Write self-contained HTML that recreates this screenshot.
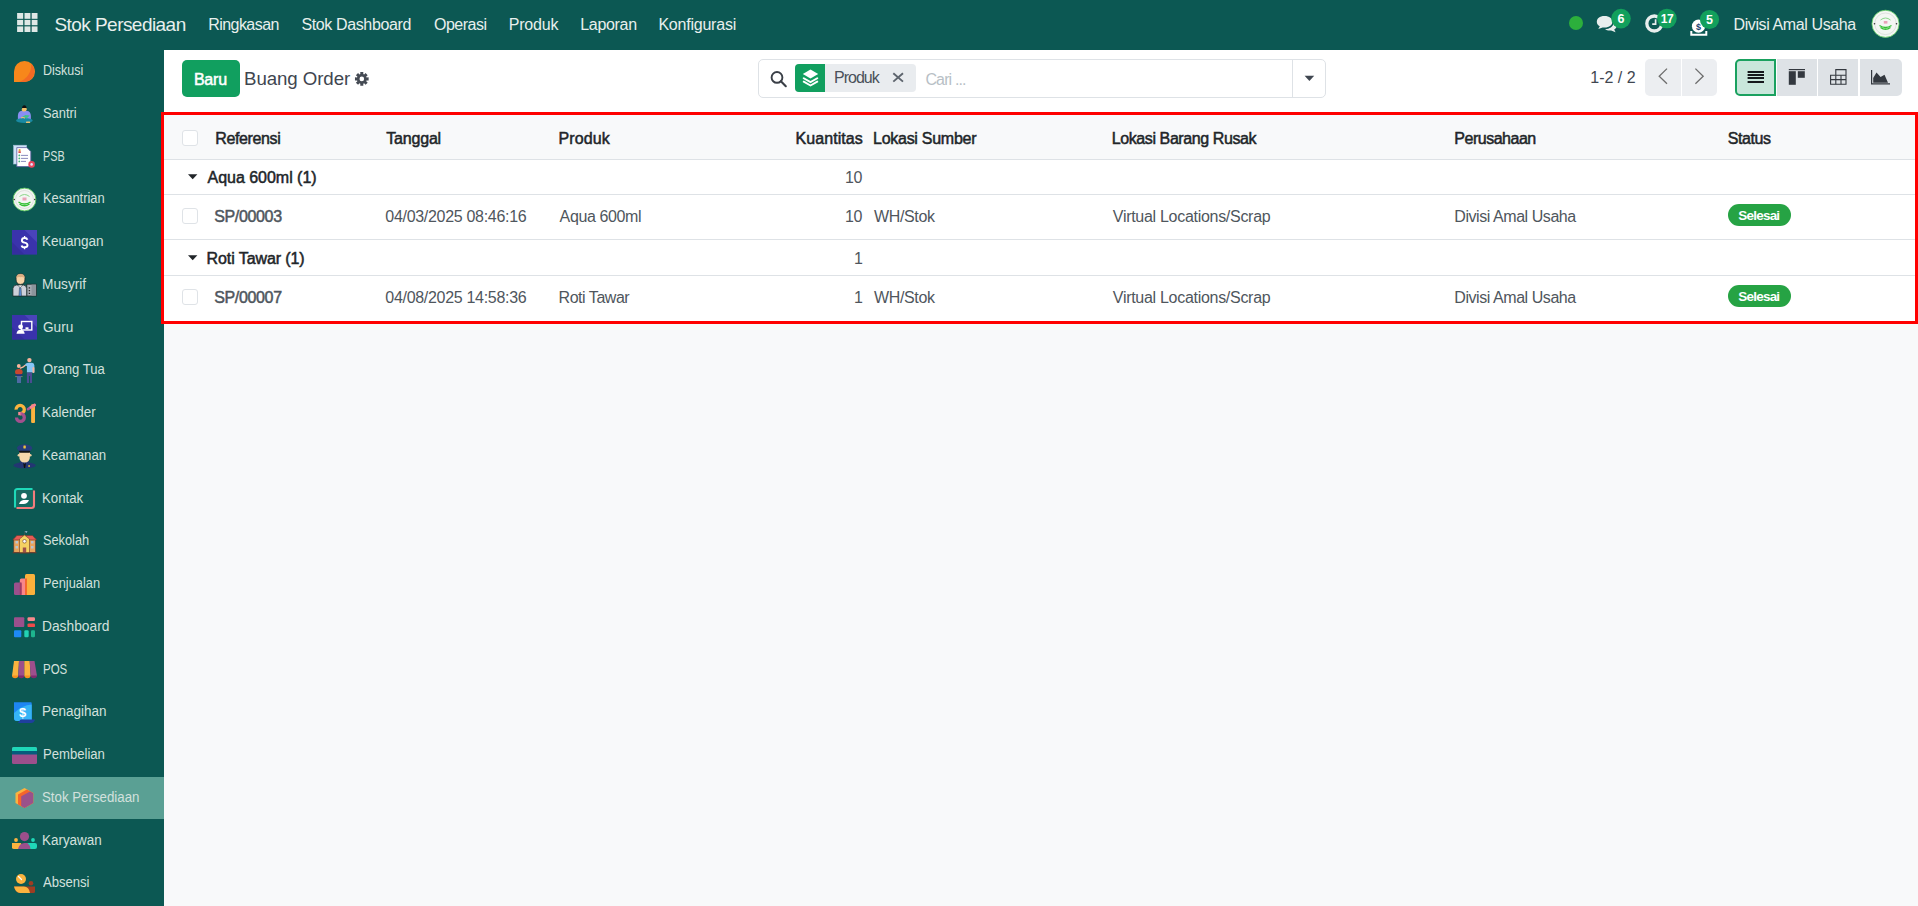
<!DOCTYPE html>
<html><head><meta charset="utf-8"><title>Buang Order</title>
<style>
html,body{margin:0;padding:0;}
body{width:1918px;height:906px;position:relative;overflow:hidden;background:#f8f9fa;font-family:"Liberation Sans",sans-serif;}
.t{position:absolute;white-space:nowrap;}
.a{position:absolute;}
.nav{left:0;top:0;width:1918px;height:50px;background:#0c5853;}
.side{left:0;top:50px;width:164px;height:856px;background:#0c5853;}
.active{left:0;top:777px;width:164px;height:42px;background:#5aa094;}
.cp{left:164px;top:50px;width:1754px;height:62px;background:#ffffff;}
.tbl{left:164px;top:115px;width:1751px;height:206px;background:#ffffff;}
.thead{left:164px;top:115px;width:1751px;height:44px;background:#f8f9fa;}
.hl{position:absolute;left:164px;width:1751px;height:1px;background:#dee2e6;}
.red{left:161px;top:112px;width:1751px;height:206px;border:3px solid #ff0000;}
.cb{position:absolute;width:14px;height:14px;border:1px solid #dfe3e7;border-radius:3px;background:#fff;}
.btn{left:182px;top:60px;width:58px;height:37px;background:#119f5f;border-radius:5px;}
.search{left:758px;top:59px;width:566px;height:37px;border:1px solid #dee2e6;border-radius:5px;background:#fff;}
.facet{left:795px;top:64px;width:121px;height:28px;background:#e9ecef;border-radius:4px;overflow:hidden;}
.facet .ic{position:absolute;left:0;top:0;width:30px;height:28px;background:#119f5f;}
.sdiv{left:1292px;top:60px;width:1px;height:37px;background:#dee2e6;}
.pager{left:1645px;top:59px;width:72px;height:37px;background:#eceef1;border-radius:5px;}
.pdiv{left:1681px;top:59px;width:1px;height:37px;background:#ffffff;}
.vb{position:absolute;top:59px;height:37px;background:#dee2e6;}
.badge{position:absolute;width:63px;height:22px;border-radius:11px;background:#26a344;}
.nb{position:absolute;width:20px;height:20px;border-radius:10px;background:#12a05c;color:#fff;font-size:12px;line-height:20px;text-align:center;}

</style></head>
<body>
<div class="a nav"></div>
<div class="a side"></div>
<div class="a active"></div>
<div class="a cp"></div>
<div class="a tbl"></div>
<div class="a thead"></div>
<div class="hl" style="top:159px"></div>
<div class="hl" style="top:194px"></div>
<div class="hl" style="top:239px"></div>
<div class="hl" style="top:275px"></div>
<div class="a red"></div>
<div class="cb" style="left:182px;top:130px"></div>
<div class="cb" style="left:182px;top:208px"></div>
<div class="cb" style="left:182px;top:289px"></div>
<div class="badge" style="left:1728px;top:204px"></div>
<div class="badge" style="left:1728px;top:285px"></div>
<div class="a btn"></div>
<div class="a search"></div>
<div class="a facet"><div class="ic"></div></div>
<div class="a sdiv"></div>
<div class="a pager"></div>
<div class="a pdiv"></div>
<div class="vb" style="left:1735px;width:41px;background:#c9e6db;border:2px solid #1aa15f;box-sizing:border-box;border-radius:5px 0 0 5px"></div>
<div class="vb" style="left:1777px;width:40px"></div>
<div class="vb" style="left:1818px;width:40px"></div>
<div class="vb" style="left:1860px;width:42px;border-radius:0 5px 5px 0"></div>

<svg class="a" style="left:0;top:0" width="164" height="906" viewBox="0 0 164 906">
<!-- Diskusi -->
<path d="M14,82 L14,71.5 A10.5,10.5 0 1 1 24.5,82 Z" fill="#f7871b"/>
<path d="M31.1,63.8 A10.5,10.5 0 0 1 24.5,82 L19,82 A17.4,17.4 0 0 0 31.1,63.8 Z" fill="#f26a24"/>
<!-- Santri -->
<path d="M17.9,119 Q17.4,112.6 20,111.3 Q24.3,109.6 28.6,111.3 Q31.3,112.6 30.9,119 Z" fill="#8a8ef2"/>
<ellipse cx="24.4" cy="120.6" rx="8.3" ry="2.5" fill="#1989a3"/>
<path d="M21.6,109.2 Q21.6,111.6 24.2,111.6 Q26.6,111.6 26.6,109.2 Z" fill="#f4c06a"/>
<path d="M22,108.8 Q22,105.2 24.3,105.2 Q26.6,105.2 26.6,108.8 Z" fill="#111"/>
<rect x="22.1" y="108" width="4.5" height="2" fill="#f4c06a"/>
<path d="M22.2,116.8 L25.5,115 L29.8,115.4 L26.6,118.6 Z" fill="#3fc08b"/>
<path d="M21,117.8 Q23,117 25,118.2" stroke="#f4c06a" stroke-width="1" fill="none"/>
<rect x="26" y="121.4" width="4.2" height="1.6" rx="0.6" fill="#e8c070"/>
<!-- PSB -->
<rect x="13.6" y="145.2" width="13" height="18.8" fill="#cfe3f6" stroke="#9fbcd8" stroke-width="0.6"/>
<path d="M16.8,147.6 L26.8,147.6 L30.8,151.6 L30.8,166.6 L16.8,166.6 Z" fill="#fff" stroke="#5a5aa0" stroke-width="0.8"/>
<circle cx="19.6" cy="150.2" r="1.1" fill="#e8a03a"/><rect x="18.4" y="151.3" width="2.4" height="1.6" fill="#d23d3d"/>
<circle cx="19.3" cy="155.4" r="0.9" fill="#45b57a"/><circle cx="19.3" cy="158.4" r="0.9" fill="#45b57a"/><circle cx="19.3" cy="161.4" r="0.9" fill="#45b57a"/>
<path d="M21,155.4 H28 M21,158.4 H28 M21,161.4 H26" stroke="#5a5aa0" stroke-width="0.7"/>
<circle cx="31.6" cy="164.4" r="3.3" fill="#e8475e"/><circle cx="31.6" cy="164.4" r="1.3" fill="#dfe6ff"/>
<!-- Kesantrian -->
<circle cx="24.5" cy="199.5" r="11.4" fill="#f3f5f2" stroke="#59c45a" stroke-width="0.9"/>
<circle cx="24.5" cy="199.5" r="9" fill="none" stroke="#c9cfc9" stroke-width="0.5"/>
<path d="M19.5,196.5 Q24.5,192.5 29.5,196.5" stroke="#7fd27f" stroke-width="0.9" fill="none"/>
<rect x="22.5" y="197.5" width="4" height="3" fill="#e9a3b8"/>
<path d="M18.5,202 Q24.5,206 30.5,202 M19.5,204 Q24.5,207.5 29.5,204" stroke="#33c033" stroke-width="1.3" fill="none"/>
<circle cx="14.2" cy="199.5" r="0.8" fill="#333"/><circle cx="34.8" cy="199.5" r="0.8" fill="#333"/>
<!-- Keuangan -->
<rect x="12" y="230" width="25" height="24.6" fill="#3a33ac"/>
<path d="M12,254.6 L12,242 L24.5,254.6 Z" fill="#2e2a8f" opacity="0.5"/><path d="M24.5,230 L37,230 L37,242.5 Z" fill="#5a56c8" opacity="0.5"/>
<path d="M24.6,236 V238.5 M24.6,247 V249.2" stroke="#fff" stroke-width="1.3"/><path d="M27.4,239.7 Q26.9,238 24.6,238 Q21.9,238 21.9,240.4 Q21.9,242.2 24.6,242.6 Q27.5,243.1 27.5,245.2 Q27.5,247.3 24.6,247.3 Q22.1,247.3 21.6,245.4" fill="none" stroke="#fff" stroke-width="1.9"/>
<!-- Musyrif -->
<rect x="26.8" y="284.2" width="9.5" height="11.8" fill="#a7adb5" stroke="#1c2a2a" stroke-width="0.8"/>
<rect x="31.5" y="284.6" width="4.4" height="11" fill="#8d949c"/>
<path d="M28.7,287.9 h1.4 M28.7,290.6 h1.4 M28.7,293.3 h1.4" stroke="#2a2a2a" stroke-width="1.3"/>
<path d="M12.9,296.1 L12.9,288.6 Q13.1,285.3 16.3,285 L23.5,285 Q26.6,285.3 26.7,288.6 L26.7,296.1 Z" fill="#cdd0da" stroke="#1c2a2a" stroke-width="0.8"/>
<path d="M17.6,285.1 L20.2,287.6 L22.8,285.1 Z" fill="#f4f4f4" stroke="#1c2a2a" stroke-width="0.5"/>
<path d="M19.5,287.8 L21,287.8 L21.6,296 L18.9,296 Z" fill="#5a8ed6" stroke="#1c2a2a" stroke-width="0.4"/>
<path d="M16,279 Q16,273.8 20.5,273.8 Q25,273.8 25,279 Q25,284.4 20.5,284.4 Q16,284.4 16,279 Z" fill="#f6d3a6" stroke="#1c2a2a" stroke-width="0.8"/>
<path d="M16.2,278.2 Q16.4,274 20.5,274 Q24.6,274 24.8,278.2 Q22.5,276.6 20.5,277.2 Q18.2,276.6 16.2,278.2 Z" fill="#dcae82"/>
<!-- Guru -->
<rect x="12" y="315" width="25" height="24.6" fill="#3a33ac"/>
<path d="M12,339.6 L12,327 L24.5,339.6 Z" fill="#2e2a8f" opacity="0.5"/><path d="M24.5,315 L37,315 L37,327.5 Z" fill="#5a56c8" opacity="0.5"/>
<rect x="21.5" y="321.5" width="10.3" height="8.5" fill="none" stroke="#fff" stroke-width="1.4"/>
<circle cx="20.6" cy="326.8" r="2.4" fill="#fff"/>
<path d="M16.5,333.8 Q17,329.8 20.6,329.8 Q24.2,329.8 24.7,333.8 Z" fill="#fff"/>
<rect x="25.5" y="327.3" width="3" height="2" fill="#fff"/>
<!-- Orang Tua -->
<circle cx="29.4" cy="360.1" r="2.2" fill="#f9b59c"/>
<path d="M24.5,365.5 Q25.5,363 28,362.8 L32,362.8 Q34.3,363 34.4,365.5 L34.4,372.4 L32.1,372.4 L32.1,372.4 L26.9,372.4 L26.9,366 Z" fill="#84c6f6"/>
<rect x="32.5" y="367" width="1.9" height="6" rx="0.9" fill="#f9b59c"/>
<path d="M26.9,372.4 H32 V383 H30 V376 H29 V383 H26.9 Z" fill="#4b4c92"/>
<path d="M20.5,368 Q23,367.5 25,365.5" stroke="#f9b59c" stroke-width="1.4" stroke-linecap="round" fill="none"/>
<circle cx="18.8" cy="366" r="1.9" fill="#f9b59c"/>
<path d="M15,372 Q15,369 18.8,369 Q22.7,369 22.7,372 Q22.7,375 18.8,375 Q15,375 15,372 Z" fill="#c6472e"/>
<path d="M15.6,374.2 H22.2 V376 H15.6 Z" fill="#22357a"/>
<path d="M15.2,376.6 H22.6" stroke="#e8b07a" stroke-width="0.5"/>
<path d="M17,376 H21 V383 H17 Z" fill="#4e6aa3"/>
<!-- Kalender -->
<path d="M16.1,409.6 A4.1,4.1 0 1 1 20.2,413.6" fill="none" stroke="#fbb33f" stroke-width="3.3"/>
<path d="M18.2,413.6 L21,413.6" stroke="#f58a93" stroke-width="3.3"/>
<path d="M20.4,413.6 A3.9,3.9 0 1 1 16.5,417.5" fill="none" stroke="#a2508e" stroke-width="3.3"/>
<path d="M20.3,411.95 L21.3,411.95 L21.3,415.25 L20.3,415.25 Z" fill="#d9708f"/>
<rect x="31.1" y="404.2" width="3.9" height="18.8" rx="1" fill="#fbb33f"/>
<path d="M28,409.2 L34.6,405" stroke="#b0559a" stroke-width="2.6" stroke-linecap="round"/>
<path d="M31,407.3 L34.6,405" stroke="#f7848e" stroke-width="2.8" stroke-linecap="round"/>
<!-- Keamanan -->
<ellipse cx="24.6" cy="465.3" rx="11.2" ry="3" fill="#233672"/>
<path d="M20.5,460.5 Q24.6,462.5 28.7,460.5 L30.5,465 L18.7,465 Z" fill="#233672"/>
<circle cx="18.9" cy="455.3" r="1.3" fill="#f2cf9f"/><circle cx="30.3" cy="455.3" r="1.3" fill="#f2cf9f"/>
<path d="M19.2,451.2 L30,451.2 L30,455.5 Q30,462.6 24.6,462.6 Q19.2,462.6 19.2,455.5 Z" fill="#f6d8ab"/>
<path d="M16.8,448.3 Q17.5,444.6 24.6,444.2 Q31.7,444.6 32.4,448.3 L30.2,451.3 L19,451.3 Z" fill="#263d7c"/>
<rect x="19" y="450.8" width="11.2" height="1.9" rx="0.8" fill="#151515"/>
<rect x="23.4" y="445.6" width="2.4" height="2.8" rx="0.4" fill="#f0c33a"/>
<path d="M23.2,462.8 L24.6,464.2 L26,462.8 L25.2,468 L24,468 Z" fill="#111"/>
<rect x="28.3" y="465.2" width="1.6" height="1.6" fill="#f0c33a"/>
<!-- Kontak -->
<rect x="15" y="489" width="19" height="19" rx="2" fill="#166a61"/>
<path d="M15,507.5 L15,491.5 Q15,489 17.5,489 L32.5,489" stroke="#1fd8b8" stroke-width="2.1" fill="none"/>
<path d="M34,490.5 L34,505.5 Q34,508 31.5,508 L16.5,508" stroke="#f37c7c" stroke-width="2.1" fill="none"/>
<circle cx="24" cy="495.8" r="2.9" fill="#fff"/>
<path d="M19,504 Q20,500.5 23.5,500 L29,500 Q27.5,504 23.5,504 Z" fill="#fff"/>
<!-- Sekolah -->
<rect x="13.8" y="538.5" width="21.6" height="14" fill="#e8a45c" stroke="#6b3a2a" stroke-width="0.6"/>
<path d="M12.8,540 L16.8,535.5 L32.5,535.5 L36.6,540 Z" fill="#e65b55" stroke="#6b3a2a" stroke-width="0.6"/>
<path d="M19.5,553 L19.5,539 L24.5,535 L29.5,539 L29.5,553 Z" fill="#f5d163" stroke="#6b3a2a" stroke-width="0.6"/>
<circle cx="24.5" cy="541.3" r="1.8" fill="#fff" stroke="#6b3a2a" stroke-width="0.6"/>
<rect x="22.8" y="547.5" width="3.4" height="5" fill="#a0504a"/>
<path d="M15.5,541 h2.5 v2.5 h-2.5 Z M15.5,546 h2.5 v2.5 h-2.5 Z M31,541 h2.5 v2.5 h-2.5 Z M31,546 h2.5 v2.5 h-2.5 Z" fill="#b9c4cf"/>
<path d="M24.5,535 V531.5" stroke="#555" stroke-width="0.5"/><path d="M24.5,531.5 L27.5,531 L26.5,533 Z" fill="#9fb7d0"/>
<rect x="12.6" y="552.3" width="24" height="0.9" fill="#6b3a2a"/>
<!-- Penjualan -->
<rect x="25" y="574" width="10" height="21" rx="1.5" fill="#fbb13c"/>
<rect x="19.8" y="578.5" width="7.2" height="16.5" rx="1.5" fill="#f9868a"/>
<rect x="25" y="578.5" width="2" height="16.5" fill="#f5682e"/>
<rect x="14" y="582.5" width="7.5" height="12.5" rx="1.5" fill="#9c508c"/>
<rect x="19.8" y="582.5" width="1.8" height="12.5" fill="#a23a61"/>
<!-- Dashboard -->
<rect x="14" y="617.3" width="10.3" height="9.8" rx="1" fill="#9c508c"/>
<rect x="27.5" y="617.3" width="7.5" height="3.7" rx="1.2" fill="#f98a8c"/>
<rect x="27.5" y="623.4" width="7.5" height="3.7" rx="1.2" fill="#f04a4a"/>
<rect x="14" y="630.3" width="7.3" height="7" rx="1" fill="#1e8af5"/>
<rect x="24.3" y="630.3" width="4.4" height="7" rx="1.2" fill="#22d2b4"/>
<rect x="31" y="630.3" width="4" height="7" rx="1.2" fill="#1db58e"/>
<!-- POS -->
<path d="M14,661 L19,661 L18.2,676 L12,676 Z" fill="#fbb33f"/>
<path d="M19,661 L24.4,661 L24.4,676 L18.2,676 Z" fill="#9c4f8c"/>
<path d="M24.4,661 L29.7,661 L30.6,676 L24.4,676 Z" fill="#fbb33f"/>
<path d="M29.7,661 L34.5,661 L37,676 L30.6,676 Z" fill="#9c4f8c"/>
<path d="M12,675.5 L18.2,675.5 Q18.2,678.2 15.1,678.2 Q12,678.2 12,675.5 Z" fill="#f7901e"/>
<path d="M18.2,675.5 L24.4,675.5 Q24.4,678.2 21.3,678.2 Q18.2,678.2 18.2,675.5 Z" fill="#7d2b6e"/>
<path d="M24.4,675.5 L30.6,675.5 Q30.6,678.2 27.5,678.2 Q24.4,678.2 24.4,675.5 Z" fill="#f7901e"/>
<path d="M30.6,675.5 L37,675.5 Q37,678.2 33.8,678.2 Q30.6,678.2 30.6,675.5 Z" fill="#7d2b6e"/>
<!-- Penagihan -->
<path d="M14,702.2 L31,702.2 Q31.7,702.2 31.7,703 L31.7,721 L17,721 Q14,721 14,718 Z" fill="#1e86f2"/>
<path d="M14,713 Q22,705 31.7,704.5 L31.7,721 L17,721 Q14,721 14,718 Z" fill="#36b4f6"/>
<path d="M18,723 Q20,719.5 21,719.5 L35,719.5 Q34,723 31,723 Z" fill="#1f3f9f"/>
<text x="22.5" y="716.5" font-family="Liberation Sans" font-weight="700" font-size="13" fill="#fff" text-anchor="middle">$</text>
<!-- Pembelian -->
<rect x="12" y="747" width="25" height="17" rx="1.5" fill="#9c4f8c"/>
<path d="M12,748.5 Q12,747 13.5,747 L35.5,747 Q37,747 37,748.5 L37,751 L12,751 Z" fill="#1fd7b8"/>
<rect x="12" y="751" width="25" height="3.5" fill="#075b7c"/>
<!-- Stok -->
<path d="M24.5,788 L33.2,793 L33.2,803 L24.5,808 L15.5,803 L15.5,793 Z" fill="#fbb33f"/>
<path d="M18,794.6 L26.9,789.6 L33.2,793 L33.2,803 L24.5,808 L18,804.5 Z" fill="#f5652a"/>
<path d="M21.2,796.3 L30.1,791.4 L33.2,793.2 L33.2,803 L24.5,808 L21.2,806 Z" fill="#9a518a"/>
<!-- Karyawan -->
<circle cx="16" cy="840" r="1.9" fill="#fbb33f"/>
<circle cx="24.5" cy="836.6" r="4.6" fill="#9c4f8c"/>
<circle cx="33" cy="840" r="1.9" fill="#1fd7b8"/>
<path d="M12,843 Q12,843 14,843 L21,843 L23,849 L14,849 Q12,849 12,847.5 Z" fill="#fbb33f"/>
<path d="M18,849 Q19.5,843 24.5,843 L30,843 L31.5,849 Z" fill="#9c4f8c"/>
<path d="M27.5,843 L35,843 Q37,843 37,845 L37,847 Q37,849 35,849 L30.5,849 Q30,845 27.5,843 Z" fill="#1fd7b8"/>
<!-- Absensi -->
<circle cx="21" cy="879" r="5" fill="#fbb33f"/>
<path d="M18.5,876.5 L21.5,879.5" stroke="#fff" stroke-width="1.2" stroke-linecap="round"/>
<circle cx="31" cy="883.2" r="2.3" fill="#9e3d22"/>
<path d="M14,886.5 L28,886.5 L35,886.5 L35,891.5 Q35,893 33.5,893 L20,893 Q15.5,893 14,886.5 Z" fill="#9e3d22"/>
<path d="M14,886.5 L24,886.5 Q29,886.5 30,893 L20,893 Q15.5,893 14,886.5 Z" fill="#fbb33f"/>
</svg>

<svg class="a" style="left:0;top:0" width="1918" height="112" viewBox="0 0 1918 112">
<!-- grid -->
<g fill="#dfe8e6">
<rect x="17.1" y="13.0" width="6.1" height="5.8"/><rect x="24.5" y="13.0" width="5.9" height="5.8"/><rect x="31.7" y="13.0" width="5.8" height="5.8"/><rect x="17.1" y="19.9" width="6.1" height="5.3"/><rect x="24.5" y="19.9" width="5.9" height="5.3"/><rect x="31.7" y="19.9" width="5.8" height="5.3"/><rect x="17.1" y="26.4" width="6.1" height="5.6"/><rect x="24.5" y="26.4" width="5.9" height="5.6"/><rect x="31.7" y="26.4" width="5.8" height="5.6"/>
</g>
<!-- status dot -->
<circle cx="1576" cy="23" r="7" fill="#2caf3c"/>
<!-- chat -->
<path d="M1604.5,16 C1599.5,16 1596.8,18.7 1596.8,21.8 C1596.8,23.8 1598,25.4 1599.8,26.3 L1598.3,29 L1602.6,27.4 C1603.2,27.5 1603.9,27.6 1604.5,27.6 C1609.5,27.6 1612.4,25 1612.4,21.8 C1612.4,18.7 1609.5,16 1604.5,16 Z" fill="#e8eeed"/>
<path d="M1613.6,23.3 C1613.2,26.8 1609.6,29 1605,29.2 C1606.2,30.1 1607.8,30.6 1609.5,30.6 C1610,30.6 1610.6,30.5 1611.1,30.4 L1615.6,32.2 L1614.2,29.6 C1615.8,28.7 1616.8,27.2 1616.8,25.6 C1616.8,24.7 1616.3,23.8 1615.6,23.1 Z" fill="#e8eeed"/>
<circle cx="1621" cy="18.6" r="9.8" fill="#12a05c"/>
<text x="1621" y="23.1" font-family="Liberation Sans" font-weight="700" font-size="12.5" fill="#fff" text-anchor="middle">6</text>
<!-- clock -->
<circle cx="1654.3" cy="23.5" r="7.5" fill="none" stroke="#e8eeed" stroke-width="3.3"/>
<path d="M1655.6,19.3 L1655.6,24.2 L1652.2,24.2" fill="none" stroke="#e8eeed" stroke-width="1.7"/>
<circle cx="1666.9" cy="18.5" r="9.8" fill="#12a05c"/>
<text x="1666.9" y="22.9" font-family="Liberation Sans" font-weight="700" font-size="12" fill="#fff" text-anchor="middle" letter-spacing="-0.5">17</text>
<!-- money -->
<circle cx="1698.5" cy="26.2" r="6.6" fill="#ffffff"/>
<text x="1698.5" y="30" font-family="Liberation Sans" font-weight="700" font-size="9" fill="#1c3f6e" text-anchor="middle">$</text>
<path d="M1691.3,31 L1691.3,34.8 L1706.3,34.8 L1706.3,31" fill="none" stroke="#ffffff" stroke-width="2"/>
<circle cx="1709.5" cy="19.5" r="9.6" fill="#12a05c"/>
<text x="1709.5" y="24" font-family="Liberation Sans" font-weight="700" font-size="12.5" fill="#fff" text-anchor="middle">5</text>
<!-- avatar -->
<circle cx="1885.5" cy="23.8" r="13.6" fill="#f4f6f3" stroke="#5ccc5c" stroke-width="0.8"/>
<circle cx="1885.5" cy="23.8" r="10.8" fill="none" stroke="#cfd3cf" stroke-width="0.6"/>
<path d="M1880.5,20 Q1885.5,16 1890.5,20" stroke="#7fd27f" stroke-width="0.9" fill="none"/>
<rect x="1883.8" y="21" width="3.6" height="2.6" fill="#e9a3b8"/>
<path d="M1879.5,25.5 Q1885.5,29.5 1891.5,25.5 M1880.5,27.5 Q1885.5,31 1890.5,27.5" stroke="#33c033" stroke-width="1.3" fill="none"/>
<circle cx="1874.5" cy="23.8" r="0.8" fill="#333"/><circle cx="1896.5" cy="23.8" r="0.8" fill="#333"/>
<!-- gear -->
<path d="M366.58,77.42 L368.63,77.37 L368.63,80.43 L366.58,80.38 L366.42,80.81 L366.22,81.23 L367.71,82.65 L365.55,84.81 L364.13,83.32 L363.71,83.52 L363.28,83.68 L363.33,85.73 L360.27,85.73 L360.32,83.68 L359.89,83.52 L359.47,83.32 L358.05,84.81 L355.89,82.65 L357.38,81.23 L357.18,80.81 L357.02,80.38 L354.97,80.43 L354.97,77.37 L357.02,77.42 L357.18,76.99 L357.38,76.57 L355.89,75.15 L358.05,72.99 L359.47,74.48 L359.89,74.28 L360.32,74.12 L360.27,72.07 L363.33,72.07 L363.28,74.12 L363.71,74.28 L364.13,74.48 L365.55,72.99 L367.71,75.15 L366.22,76.57 L366.42,76.99 Z M359.50,78.90 a2.3,2.3 0 1 0 4.6,0 a2.3,2.3 0 1 0 -4.6,0 Z" fill="#454b54" fill-rule="evenodd"/>
<!-- search icon -->
<circle cx="777" cy="77.4" r="5.4" fill="none" stroke="#3a3f47" stroke-width="1.9"/>
<path d="M780.9,81.3 L785.8,86.2" stroke="#3a3f47" stroke-width="2.1" stroke-linecap="round"/>
<!-- layers icon in facet -->
<g fill="#fff">
<path d="M810.5,69.6 L818.2,74 L810.5,78.4 L802.8,74 Z"/>
<path d="M803.8,77.2 L810.5,81 L817.2,77.2 L818.2,77.8 L818.2,78.8 L810.5,83.2 L802.8,78.8 L802.8,77.8 Z"/>
<path d="M803.8,80.6 L810.5,84.4 L817.2,80.6 L818.2,81.2 L818.2,82.2 L810.5,86.4 L802.8,82.2 L802.8,81.2 Z"/>
</g>
<!-- facet x -->
<path d="M893.3,73.2 L903,81.6 M903,73.2 L893.3,81.6" stroke="#5d646d" stroke-width="1.9"/>
<!-- caret -->
<path d="M1304.6,75.8 L1314.2,75.8 L1309.4,81 Z" fill="#3f4650"/>
<!-- chevrons -->
<path d="M1667,68.6 L1659.2,76.2 L1667,83.8" fill="none" stroke="#6e6e6e" stroke-width="1.3"/>
<path d="M1695.4,68.6 L1703.2,76.2 L1695.4,83.8" fill="none" stroke="#6e6e6e" stroke-width="1.3"/>
<!-- list icon -->
<g fill="#15181c"><rect x="1747.6" y="71" width="16.4" height="2"/><rect x="1747.6" y="74" width="16.4" height="2"/><rect x="1747.6" y="77" width="16.4" height="2"/><rect x="1747.6" y="81" width="16.4" height="2"/></g>
<!-- kanban icon -->
<g fill="#33383f"><rect x="1788.8" y="69" width="16.2" height="1.2"/><rect x="1788.8" y="71.2" width="7" height="13.6"/><rect x="1797.8" y="71.2" width="7" height="6.6"/></g>
<!-- pivot icon -->
<g fill="none" stroke="#33383f" stroke-width="1.1">
<path d="M1835.8,75.2 V69.6 H1846 V84.2 H1830.6 V75.2 H1846"/>
<path d="M1830.6,79.6 H1846 M1835.8,75.2 V84.2 M1841,75.2 V84.2"/>
</g>
<!-- graph icon -->
<path d="M1871.6,70 V83.9 H1890" fill="none" stroke="#33383f" stroke-width="1.2"/>
<path d="M1873.2,82.8 L1873.2,78 L1876.5,72.5 L1880.6,77 L1884.5,74.8 L1888,82.8 Z" fill="#33383f"/>
</svg>
<svg class="a" style="left:164px;top:160px" width="40" height="120" viewBox="164 160 40 120">
<path d="M188,174.2 L197.4,174.2 L192.7,179.2 Z" fill="#212529"/>
<path d="M188,255.2 L197.4,255.2 L192.7,260.2 Z" fill="#212529"/>
</svg>

<span class="t" id="nav_title" style="left:54.40px;top:14.75px;font-size:19.00px;line-height:19.00px;letter-spacing:-0.543px;color:#e8efed;">Stok Persediaan</span>
<span class="t" id="menu0" style="left:208.20px;top:17.40px;font-size:16.00px;line-height:16.00px;letter-spacing:-0.550px;color:#e8efed;">Ringkasan</span>
<span class="t" id="menu1" style="left:301.40px;top:17.40px;font-size:16.00px;line-height:16.00px;letter-spacing:-0.369px;color:#e8efed;">Stok Dashboard</span>
<span class="t" id="menu2" style="left:434.00px;top:17.40px;font-size:16.00px;line-height:16.00px;letter-spacing:-0.500px;color:#e8efed;">Operasi</span>
<span class="t" id="menu3" style="left:508.70px;top:17.40px;font-size:16.00px;line-height:16.00px;letter-spacing:-0.200px;color:#e8efed;">Produk</span>
<span class="t" id="menu4" style="left:580.20px;top:17.40px;font-size:16.00px;line-height:16.00px;letter-spacing:-0.300px;color:#e8efed;">Laporan</span>
<span class="t" id="menu5" style="left:658.40px;top:17.40px;font-size:16.00px;line-height:16.00px;letter-spacing:-0.220px;color:#e8efed;">Konfigurasi</span>
<span class="t" id="user" style="left:1733.50px;top:17.20px;font-size:16.00px;line-height:16.00px;letter-spacing:-0.388px;color:#e8efed;">Divisi Amal Usaha</span>
<span class="t" id="side0" style="left:43.40px;top:61.73px;font-size:15.50px;line-height:15.50px;transform:scaleX(0.8065);transform-origin:0 0;color:#d3e0dd;">Diskusi</span>
<span class="t" id="side1" style="left:43.40px;top:105.47px;font-size:15.50px;line-height:15.50px;transform:scaleX(0.8302);transform-origin:0 0;color:#d3e0dd;">Santri</span>
<span class="t" id="side2" style="left:43.40px;top:148.20px;font-size:15.50px;line-height:15.50px;transform:scaleX(0.7014);transform-origin:0 0;color:#d3e0dd;">PSB</span>
<span class="t" id="side3" style="left:43.40px;top:189.94px;font-size:15.50px;line-height:15.50px;transform:scaleX(0.8330);transform-origin:0 0;color:#d3e0dd;">Kesantrian</span>
<span class="t" id="side4" style="left:42.40px;top:232.69px;font-size:15.50px;line-height:15.50px;transform:scaleX(0.8717);transform-origin:0 0;color:#d3e0dd;">Keuangan</span>
<span class="t" id="side5" style="left:42.40px;top:276.43px;font-size:15.50px;line-height:15.50px;transform:scaleX(0.8842);transform-origin:0 0;color:#d3e0dd;">Musyrif</span>
<span class="t" id="side6" style="left:43.40px;top:319.17px;font-size:15.50px;line-height:15.50px;transform:scaleX(0.8768);transform-origin:0 0;color:#d3e0dd;">Guru</span>
<span class="t" id="side7" style="left:43.40px;top:360.91px;font-size:15.50px;line-height:15.50px;transform:scaleX(0.8433);transform-origin:0 0;color:#d3e0dd;">Orang Tua</span>
<span class="t" id="side8" style="left:42.40px;top:403.65px;font-size:15.50px;line-height:15.50px;transform:scaleX(0.8664);transform-origin:0 0;color:#d3e0dd;">Kalender</span>
<span class="t" id="side9" style="left:42.40px;top:447.39px;font-size:15.50px;line-height:15.50px;transform:scaleX(0.8554);transform-origin:0 0;color:#d3e0dd;">Keamanan</span>
<span class="t" id="side10" style="left:42.40px;top:490.13px;font-size:15.50px;line-height:15.50px;transform:scaleX(0.8542);transform-origin:0 0;color:#d3e0dd;">Kontak</span>
<span class="t" id="side11" style="left:43.40px;top:531.87px;font-size:15.50px;line-height:15.50px;transform:scaleX(0.8222);transform-origin:0 0;color:#d3e0dd;">Sekolah</span>
<span class="t" id="side12" style="left:43.40px;top:574.61px;font-size:15.50px;line-height:15.50px;transform:scaleX(0.8281);transform-origin:0 0;color:#d3e0dd;">Penjualan</span>
<span class="t" id="side13" style="left:42.40px;top:618.35px;font-size:15.50px;line-height:15.50px;transform:scaleX(0.8895);transform-origin:0 0;color:#d3e0dd;">Dashboard</span>
<span class="t" id="side14" style="left:43.40px;top:661.09px;font-size:15.50px;line-height:15.50px;transform:scaleX(0.7422);transform-origin:0 0;color:#d3e0dd;">POS</span>
<span class="t" id="side15" style="left:42.40px;top:702.83px;font-size:15.50px;line-height:15.50px;transform:scaleX(0.8686);transform-origin:0 0;color:#d3e0dd;">Penagihan</span>
<span class="t" id="side16" style="left:43.40px;top:745.57px;font-size:15.50px;line-height:15.50px;transform:scaleX(0.8452);transform-origin:0 0;color:#d3e0dd;">Pembelian</span>
<span class="t" id="side17" style="left:42.40px;top:789.31px;font-size:15.50px;line-height:15.50px;transform:scaleX(0.8567);transform-origin:0 0;color:#d3e0dd;">Stok Persediaan</span>
<span class="t" id="side18" style="left:42.40px;top:832.05px;font-size:15.50px;line-height:15.50px;transform:scaleX(0.8662);transform-origin:0 0;color:#d3e0dd;">Karyawan</span>
<span class="t" id="side19" style="left:43.40px;top:873.79px;font-size:15.50px;line-height:15.50px;transform:scaleX(0.8438);transform-origin:0 0;color:#d3e0dd;">Absensi</span>
<span class="t" id="baru" style="left:193.90px;top:72.20px;font-size:16.00px;line-height:16.00px;letter-spacing:-0.200px;color:#ffffff;-webkit-text-stroke:0.50px #ffffff;">Baru</span>
<span class="t" id="bc" style="left:244.00px;top:69.70px;font-size:18.70px;line-height:18.70px;letter-spacing:-0.080px;color:#3f4650;">Buang Order</span>
<span class="t" id="facet" style="left:834.00px;top:70.15px;font-size:16.00px;line-height:16.00px;letter-spacing:-1.000px;color:#4a515a;">Produk</span>
<span class="t" id="cari" style="left:925.40px;top:72.40px;font-size:16.00px;line-height:16.00px;letter-spacing:-0.857px;color:#b8bfc6;">Cari ...</span>
<span class="t" id="pager" style="left:1590.30px;top:70.40px;font-size:16.00px;line-height:16.00px;letter-spacing:0.000px;color:#3f4650;">1-2 / 2</span>
<span class="t" id="hdr0" style="left:215.30px;top:131.20px;font-size:16.00px;line-height:16.00px;letter-spacing:-0.375px;color:#212529;-webkit-text-stroke:0.50px #212529;">Referensi</span>
<span class="t" id="hdr1" style="left:386.30px;top:131.20px;font-size:16.00px;line-height:16.00px;letter-spacing:-0.200px;color:#212529;-webkit-text-stroke:0.50px #212529;">Tanggal</span>
<span class="t" id="hdr2" style="left:558.60px;top:131.20px;font-size:16.00px;line-height:16.00px;letter-spacing:0.080px;color:#212529;-webkit-text-stroke:0.50px #212529;">Produk</span>
<span class="t" id="hdr3" style="left:795.60px;top:131.20px;font-size:16.00px;line-height:16.00px;letter-spacing:0.050px;color:#212529;-webkit-text-stroke:0.50px #212529;">Kuantitas</span>
<span class="t" id="hdr4" style="left:873.00px;top:131.20px;font-size:16.00px;line-height:16.00px;letter-spacing:-0.267px;color:#212529;-webkit-text-stroke:0.50px #212529;">Lokasi Sumber</span>
<span class="t" id="hdr5" style="left:1111.80px;top:131.20px;font-size:16.00px;line-height:16.00px;letter-spacing:-0.411px;color:#212529;-webkit-text-stroke:0.50px #212529;">Lokasi Barang Rusak</span>
<span class="t" id="hdr6" style="left:1454.30px;top:131.20px;font-size:16.00px;line-height:16.00px;letter-spacing:-0.489px;color:#212529;-webkit-text-stroke:0.50px #212529;">Perusahaan</span>
<span class="t" id="hdr7" style="left:1727.70px;top:131.20px;font-size:16.00px;line-height:16.00px;letter-spacing:-0.400px;color:#212529;-webkit-text-stroke:0.50px #212529;">Status</span>
<span class="t" id="g1" style="left:207.60px;top:170.20px;font-size:16.00px;line-height:16.00px;letter-spacing:-0.031px;color:#212529;-webkit-text-stroke:0.50px #212529;">Aqua 600ml (1)</span>
<span class="t" id="g1q" style="left:845.00px;top:170.20px;font-size:16.00px;line-height:16.00px;letter-spacing:-0.400px;color:#4f565d;">10</span>
<span class="t" id="g2" style="left:206.60px;top:250.50px;font-size:16.00px;line-height:16.00px;letter-spacing:-0.092px;color:#212529;-webkit-text-stroke:0.50px #212529;">Roti Tawar (1)</span>
<span class="t" id="g2q" style="left:854.00px;top:250.50px;font-size:16.00px;line-height:16.00px;letter-spacing:-6.400px;color:#4f565d;">1</span>
<span class="t" id="r0ref" style="left:214.20px;top:209.40px;font-size:16.00px;line-height:16.00px;letter-spacing:-0.343px;color:#4f565d;-webkit-text-stroke:0.50px #4f565d;">SP/00003</span>
<span class="t" id="r0dt" style="left:385.30px;top:209.40px;font-size:16.00px;line-height:16.00px;letter-spacing:-0.300px;color:#4f565d;">04/03/2025 08:46:16</span>
<span class="t" id="r0prod" style="left:559.60px;top:209.40px;font-size:16.00px;line-height:16.00px;letter-spacing:-0.378px;color:#4f565d;">Aqua 600ml</span>
<span class="t" id="r0q" style="left:845.00px;top:209.40px;font-size:16.00px;line-height:16.00px;letter-spacing:-0.400px;color:#4f565d;">10</span>
<span class="t" id="r0src" style="left:874.00px;top:209.40px;font-size:16.00px;line-height:16.00px;letter-spacing:-0.367px;color:#4f565d;">WH/Stok</span>
<span class="t" id="r0dst" style="left:1112.80px;top:209.40px;font-size:16.00px;line-height:16.00px;letter-spacing:-0.291px;color:#4f565d;">Virtual Locations/Scrap</span>
<span class="t" id="r0co" style="left:1454.30px;top:209.40px;font-size:16.00px;line-height:16.00px;letter-spacing:-0.438px;color:#4f565d;">Divisi Amal Usaha</span>
<span class="t" id="r0badge" style="left:1738.20px;top:208.72px;font-size:13.50px;line-height:13.50px;letter-spacing:-0.767px;color:#ffffff;font-weight:700;">Selesai</span>
<span class="t" id="r1ref" style="left:214.20px;top:290.40px;font-size:16.00px;line-height:16.00px;letter-spacing:-0.343px;color:#4f565d;-webkit-text-stroke:0.50px #4f565d;">SP/00007</span>
<span class="t" id="r1dt" style="left:385.30px;top:290.40px;font-size:16.00px;line-height:16.00px;letter-spacing:-0.300px;color:#4f565d;">04/08/2025 14:58:36</span>
<span class="t" id="r1prod" style="left:558.60px;top:290.40px;font-size:16.00px;line-height:16.00px;letter-spacing:-0.467px;color:#4f565d;">Roti Tawar</span>
<span class="t" id="r1q" style="left:854.00px;top:290.40px;font-size:16.00px;line-height:16.00px;letter-spacing:-6.400px;color:#4f565d;">1</span>
<span class="t" id="r1src" style="left:874.00px;top:290.40px;font-size:16.00px;line-height:16.00px;letter-spacing:-0.367px;color:#4f565d;">WH/Stok</span>
<span class="t" id="r1dst" style="left:1112.80px;top:290.40px;font-size:16.00px;line-height:16.00px;letter-spacing:-0.291px;color:#4f565d;">Virtual Locations/Scrap</span>
<span class="t" id="r1co" style="left:1454.30px;top:290.40px;font-size:16.00px;line-height:16.00px;letter-spacing:-0.438px;color:#4f565d;">Divisi Amal Usaha</span>
<span class="t" id="r1badge" style="left:1738.20px;top:289.72px;font-size:13.50px;line-height:13.50px;letter-spacing:-0.767px;color:#ffffff;font-weight:700;">Selesai</span>
</body></html>
